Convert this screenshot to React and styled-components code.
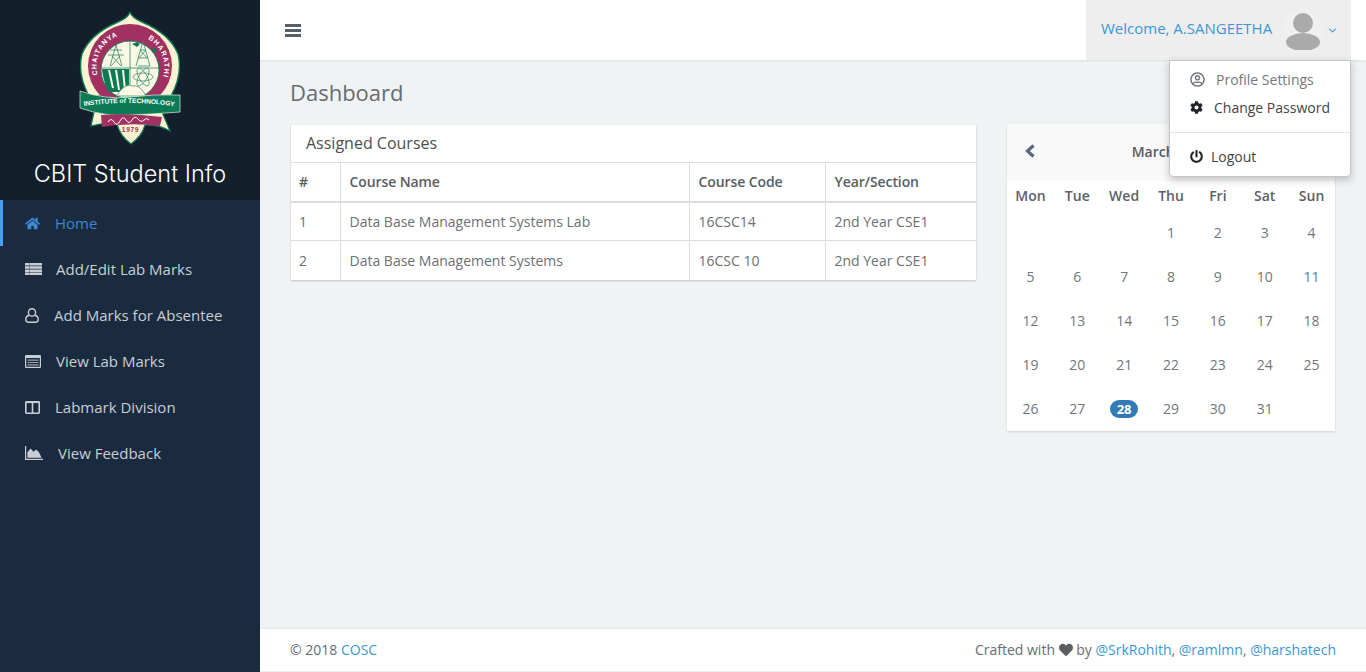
import React from 'react';
import styled, { createGlobalStyle } from 'styled-components';
import {
  FaHome, FaAngleDown, FaCog, FaPowerOff, FaHeart, FaRegUserCircle,
} from 'react-icons/fa';

const GlobalStyle = createGlobalStyle`
  html, body { margin: 0; padding: 0; height: 100%; overflow: hidden; }
  body {
    font-family: "Open Sans", "Liberation Sans", sans-serif;
    font-size: 14px;
    color: #5f6469;
    background: #eff3f4;
  }
  * { box-sizing: border-box; }
`;

const Shell = styled.div`
  display: flex;
  height: 672px;
  width: 1366px;
  position: relative;
`;

const Sidebar = styled.aside`
  width: 260px;
  flex: none;
  background: #1a2b3f;
`;

const Brand = styled.div`
  height: 200px;
  background: #141f2c;
  display: flex;
  flex-direction: column;
  align-items: center;
  padding-top: 12px;
`;

const BrandName = styled.div`
  margin-top: 12px;
  font-family: Inter, "Open Sans", sans-serif;
  font-weight: 300;
  font-size: 23.5px;
  line-height: 30px;
  color: #fff;
`;

const NavList = styled.nav`
  display: flex;
  flex-direction: column;
`;

const NavItem = styled.a`
  height: 46px;
  display: flex;
  align-items: center;
  padding-left: 25px;
  font-size: 15px;
  font-weight: ${p => (p.$active ? 400 : 500)};
  color: ${p => (p.$active ? '#3f87d0' : '#c9ced5')};
  box-shadow: ${p => (p.$active ? 'inset 3px 0 0 #4a9ff5' : 'none')};
`;

const NavIcon = styled.span`
  width: ${p => p.$slot}px;
  flex: none;
  display: flex;
  align-items: center;
  font-size: 15px;
`;

const Body = styled.div`
  flex: 1;
  display: flex;
  flex-direction: column;
  min-width: 0;
`;

const Topbar = styled.header`
  height: 60px;
  flex: none;
  background: #fff;
  display: flex;
  align-items: center;
  justify-content: space-between;
  padding: 0 15px 0 25px;
  box-shadow: 0 1px 2px rgba(0, 0, 0, 0.08);
`;

const Burger = styled.span`
  width: 16px;
  height: 13px;
  margin-top: 1px;
  display: flex;
  flex-direction: column;
  justify-content: space-between;
  span {
    height: 3px;
    background: #56606a;
  }
`;

const UserBox = styled.div`
  width: 265px;
  height: 60px;
  background: #eee;
  display: flex;
  align-items: center;
  padding-left: 15px;
  color: #3a97d8;
`;

const Welcome = styled.span`
  font-size: 15px;
  margin-top: -5px;
  width: 182px;
  white-space: nowrap;
`;

const Caret = styled.span`
  display: flex;
  margin-left: 3px;
  font-size: 13px;
  color: #3a97d8;
  path { stroke: #eee; stroke-width: 40px; }
`;

const Menu = styled.div`
  position: absolute;
  top: 60px;
  left: 1169px;
  width: 182px;
  height: 117px;
  background: #fff;
  border: 1px solid #c4c6c8;
  border-radius: 0 0 4px 4px;
  box-shadow: 0 3px 8px rgba(0, 0, 0, 0.22);
  z-index: 5;
  padding-top: 4px;
`;

const MenuItem = styled.a`
  display: flex;
  align-items: center;
  height: 28px;
  padding-left: 20px;
  color: ${p => (p.$muted ? '#73787c' : '#3f444a')};
`;

const MenuIcon = styled.span`
  width: ${p => p.$slot}px;
  flex: none;
  display: flex;
  font-size: ${p => p.$size || 14}px;
  color: ${p => (p.$muted ? '#6d7175' : '#1f2226')};
`;

const MenuRule = styled.div`
  height: 1px;
  background: #e3e4e5;
  margin: 11px 0 9px;
`;

const Content = styled.main`
  flex: 1;
  padding: 15px 30px 0;
`;

const PageTitle = styled.h1`
  margin: 0;
  font-size: 22px;
  font-weight: 400;
  line-height: 34px;
  color: #676c71;
`;

const Columns = styled.div`
  display: flex;
  align-items: flex-start;
  margin-top: 16px;
`;

const Card = styled.section`
  width: 685px;
  margin-left: 1px;
  background: #fff;
  box-shadow: 0 1px 2px rgba(0, 0, 0, 0.2);
`;

const CardTitle = styled.div`
  height: 37px;
  padding-left: 15px;
  font-size: 16px;
  line-height: 37px;
  color: #4a4e52;
`;

const Table = styled.table`
  width: 100%;
  border-collapse: collapse;
  table-layout: fixed;
`;

const Th = styled.th`
  width: ${p => p.$w}px;
  height: 39px;
  padding: 0 8px 0 9px;
  text-align: left;
  font-weight: 600;
  letter-spacing: -0.1px;
  color: #585d62;
  border-top: 1px solid #ddd;
  border-bottom: 2px solid #ddd;
  border-left: 1px solid #ddd;
  &:first-child { border-left: 0; padding-left: 8px; }
`;

const Td = styled.td`
  height: 39px;
  padding: 0 8px 0 9px;
  color: #6b7075;
  border-top: 1px solid #ddd;
  border-left: 1px solid #ddd;
  &:first-child { border-left: 0; padding-left: 8px; }
`;

const Calendar = styled.section`
  width: 328px;
  margin-left: 31px;
  margin-top: -1px;
  background: #fff;
  box-shadow: 0 1px 2px rgba(0, 0, 0, 0.15);
  height: 307px;
`;

const CalHead = styled.div`
  height: 57px;
  background: #f9f9f9;
  display: flex;
  align-items: center;
  justify-content: space-between;
  padding: 0 17px 3px;
  color: #565b60;
  font-weight: 600;
  font-size: 14px;
`;

const CalGrid = styled.div`
  display: grid;
  grid-template-columns: repeat(7, 1fr);
`;

const DayName = styled.div`
  height: 30px;
  padding-bottom: 2px;
  display: flex;
  align-items: center;
  justify-content: center;
  font-weight: 600;
  color: #5c6166;
`;

const DayCell = styled.div`
  height: 44px;
  padding-bottom: 2px;
  display: flex;
  align-items: center;
  justify-content: center;
  color: #71767b;
`;

const Today = styled.span`
  width: 28px;
  height: 18px;
  margin-top: 2px;
  border-radius: 9px;
  background: #337ab7;
  color: #fff;
  font-weight: 700;
  font-size: 13px;
  line-height: 18px;
  text-align: center;
`;

const Footer = styled.footer`
  height: 44px;
  flex: none;
  background: #fff;
  border-top: 1px solid #e6e9ea;
  border-bottom: 1px solid #eee;
  display: flex;
  align-items: center;
  justify-content: space-between;
  padding: 0 30px 2px;
  color: #676c71;
`;

const FootLink = styled.a`
  color: #3a97d8;
`;

const HeartIcon = styled(FaHeart)`
  font-size: 14px;
  vertical-align: -2px;
  color: #5a5e62;
`;

const GREEN = '#0c7a55';
const MAROON = '#a03161';
const CREAM = '#fdf3d3';

const Logo = () => (
  <svg width="120" height="135" viewBox="0 0 120 135" aria-label="CBIT logo">
    <defs>
      <path id="ringLeft" d="M27.5 63 A33 33 0 0 1 60 22" />
      <path id="ringRight" d="M78 27 A33 33 0 0 1 92 68" />
      <path id="ribbonLine" d="M14 94 Q35 91 60 91 T108 95" />
    </defs>
    {/* lower lotus */}
    <path d="M24 100 L21 114 Q35 110 47 112 Q50 124 61 132 Q72 124 75 113 Q88 112 100 119 L92 100 Z" fill={CREAM} stroke={GREEN} strokeWidth="1.2" />
    {/* dome */}
    <path d="M60 0 Q62 6 72 10 Q100 22 108 42 Q113 62 101 84 L19 84 Q7 62 12 42 Q20 22 48 10 Q58 6 60 0 Z" fill={CREAM} stroke={GREEN} strokeWidth="1.4" />
    {/* ring */}
    <circle cx="60" cy="54" r="42" fill={MAROON} />
    <circle cx="60" cy="58" r="29" fill="#fdf8e4" stroke={GREEN} strokeWidth="0.8" />
    <text fontSize="7" fontWeight="700" fill="#fff" letterSpacing="0.9" fontFamily="Liberation Sans, sans-serif">
      <textPath href="#ringLeft">CHAITANYA</textPath>
    </text>
    <text fontSize="7" fontWeight="700" fill="#fff" letterSpacing="1" fontFamily="Liberation Sans, sans-serif">
      <textPath href="#ringRight">BHARATHI</textPath>
    </text>
    {/* quadrants */}
    <path d="M31 56 H89 M60 29 V82" stroke={GREEN} strokeWidth="0.7" />
    <path d="M32 57 H59 V80 L38 80 Q33 68 32 57 Z" fill={GREEN} />
    <path d="M39 58 L43 76 M46 58 L49 78 M53 58 L55 78" stroke="#fdf8e4" strokeWidth="2" />
    <path d="M46 33 L40 54 M46 33 L52 54 M40 38 H52 M38 43 H54 M41 54 L50 44 M51 54 L42 44" stroke="#2c8c68" strokeWidth="0.8" fill="none" />
    <path d="M73 29 L66 54 M73 29 L80 54 M70 38 H76 M68 46 H78 M68 54 H80 M69 46 L76 38 M77 46 L70 38" stroke="#2c8c68" strokeWidth="0.8" fill="none" />
    <path d="M62 32 l5 -2 l3 2 l-3 3 Z M81 38 l4 -2 l2 3 l-3 2 Z" fill={GREEN} />
    <g stroke="#2c8c68" strokeWidth="0.7" fill="none">
      <ellipse cx="73" cy="65" rx="10" ry="4" />
      <ellipse cx="73" cy="65" rx="10" ry="4" transform="rotate(60 73 65)" />
      <ellipse cx="73" cy="65" rx="10" ry="4" transform="rotate(120 73 65)" />
    </g>
    <path d="M46 84 Q56 70 62 74 Q70 72 76 84 Z" fill="#fdf8e4" stroke={GREEN} strokeWidth="0.6" />
    {/* ribbon */}
    <path d="M10 79 Q36 88 60 85 T110 83 L110 100 Q84 102 60 103 Q36 105 10 96 Z" fill={GREEN} stroke="#dff0e4" strokeWidth="0.7" />
    <text fontSize="6.6" fontWeight="700" fill="#fff" fontFamily="Liberation Sans, sans-serif">
      <textPath href="#ribbonLine">INSTITUTE of TECHNOLOGY</textPath>
    </text>
    {/* motto */}
    <path d="M31 103 Q60 101 92 105 L90 114 Q60 110 32 115 Z" fill={MAROON} />
    <path d="M38 110 q3 -5 6 0 t6 -1 t6 -1 t6 0 t6 -1 t6 1 t5 0" stroke="#fff" strokeWidth="1" fill="none" />
    <text x="60.5" y="119.5" textAnchor="middle" fontSize="6.6" fontWeight="700" fill={MAROON} letterSpacing="0.7" fontFamily="Liberation Sans, sans-serif">1979</text>
  </svg>
);

const Avatar = () => (
  <svg width="40" height="40" viewBox="0 0 40 40" style={{ flex: 'none' }}>
    <circle cx="20" cy="20" r="20" fill="#f0f0f0" />
    <circle cx="20" cy="13" r="10" fill="#aaa" />
    <ellipse cx="20" cy="32" rx="17" ry="9" fill="#aaa" />
  </svg>
);

// FontAwesome 4 style glyphs, redrawn because the v5 set differs
const ThListIcon = () => (
  <svg width="17" height="12" viewBox="0 0 17 12" fill="currentColor">
    <path d="M0 0h17v2.5H0zM0 3.2h17v2.5H0zM0 6.4h17v2.5H0zM0 9.6h17V12H0z" />
    <path d="M4 0h.7v12H4z" fill="#1a2b3f" opacity="0.5" />
  </svg>
);

const UserOIcon = () => (
  <svg width="14" height="15" viewBox="0 0 14 15" fill="none" stroke="currentColor" strokeWidth="1.4">
    <ellipse cx="7" cy="4.4" rx="3.6" ry="3.7" />
    <path d="M4.2 7.2 C1.8 7.6 .8 9.4 .8 11.6 C.8 13.2 1.8 14.2 3.2 14.2 H10.8 C12.2 14.2 13.2 13.2 13.2 11.6 C13.2 9.4 12.2 7.6 9.8 7.2" />
  </svg>
);

const ListAltIcon = () => (
  <svg width="16" height="13" viewBox="0 0 16 13" fill="currentColor">
    <path fillRule="evenodd" d="M1.2 0h13.6A1.2 1.2 0 0 1 16 1.2v10.6a1.2 1.2 0 0 1-1.2 1.2H1.2A1.2 1.2 0 0 1 0 11.8V1.2A1.2 1.2 0 0 1 1.2 0zM1.2 3v8.8h13.6V3z" />
    <path d="M2.5 4.5h11v1.2h-11zM2.5 6.9h11v1.2h-11zM2.5 9.2h11v1.2h-11z" opacity="0.75" />
  </svg>
);

const ColumnsIcon = () => (
  <svg width="15" height="13" viewBox="0 0 15 13" fill="none" stroke="currentColor" strokeWidth="1.6">
    <rect x="0.8" y="0.9" width="13.4" height="11.3" rx="0.6" />
    <path d="M7.5 1v11" />
    <path d="M0.7 1.3h13.6" />
  </svg>
);

const AreaIcon = () => (
  <svg width="18" height="14" viewBox="0 0 18 14" fill="currentColor">
    <path d="M0 0h1.2v12.8H18V14H0z" />
    <path d="M2.4 11.8V6.2L5.6 2.4l3 3.4 2.4-2.2 3 2.6 2.6 5.6z" />
  </svg>
);

const BackIcon = () => (
  <svg width="12" height="14" viewBox="0 0 12 14" fill="none" stroke="#566a7d" strokeWidth="3.2">
    <path d="M9.5 1.5 L3.5 7 L9.5 12.5" />
  </svg>
);

const ForwardIcon = () => (
  <svg width="12" height="14" viewBox="0 0 12 14" fill="none" stroke="#566a7d" strokeWidth="3.2">
    <path d="M2.5 1.5 L8.5 7 L2.5 12.5" />
  </svg>
);

const navItems = [
  { label: 'Home', icon: FaHome, slot: 30, active: true },
  { label: 'Add/Edit Lab Marks', icon: ThListIcon, slot: 31 },
  { label: 'Add Marks for Absentee', icon: UserOIcon, slot: 29 },
  { label: 'View Lab Marks', icon: ListAltIcon, slot: 31 },
  { label: 'Labmark Division', icon: ColumnsIcon, slot: 30 },
  { label: 'View Feedback', icon: AreaIcon, slot: 33 },
];

const days = ['Mon', 'Tue', 'Wed', 'Thu', 'Fri', 'Sat', 'Sun'];
const dates = [null, null, null];
for (let i = 1; i <= 31; i++) dates.push(i);

const courses = [
  ['1', 'Data Base Management Systems Lab', '16CSC14', '2nd Year CSE1'],
  ['2', 'Data Base Management Systems', '16CSC 10', '2nd Year CSE1'],
];

const App = () => (
  <Shell>
    <GlobalStyle />
    <Sidebar>
      <Brand>
        <Logo />
        <BrandName>CBIT Student Info</BrandName>
      </Brand>
      <NavList>
        {navItems.map(item => (
          <NavItem key={item.label} $active={item.active}>
            <NavIcon $slot={item.slot}><item.icon /></NavIcon>
            {item.label}
          </NavItem>
        ))}
      </NavList>
    </Sidebar>

    <Body>
      <Topbar>
        <Burger><span /><span /><span /></Burger>
        <UserBox>
          <Welcome>Welcome, A.SANGEETHA</Welcome>
          <Avatar />
          <Caret><FaAngleDown /></Caret>
        </UserBox>
      </Topbar>

      <Content>
        <PageTitle>Dashboard</PageTitle>
        <Columns>
          <Card>
            <CardTitle>Assigned Courses</CardTitle>
            <Table>
              <thead>
                <tr>
                  <Th $w={49}>#</Th>
                  <Th $w={349}>Course Name</Th>
                  <Th $w={136}>Course Code</Th>
                  <Th $w={151}>Year/Section</Th>
                </tr>
              </thead>
              <tbody>
                {courses.map(row => (
                  <tr key={row[0]}>
                    {row.map(cell => <Td key={cell}>{cell}</Td>)}
                  </tr>
                ))}
              </tbody>
            </Table>
          </Card>

          <Calendar>
            <CalHead>
              <BackIcon />
              <span>March 2018</span>
              <ForwardIcon />
            </CalHead>
            <CalGrid>
              {days.map(d => <DayName key={d}>{d}</DayName>)}
              {dates.map((d, i) => (
                <DayCell key={i}>{d === 28 ? <Today>28</Today> : d}</DayCell>
              ))}
            </CalGrid>
          </Calendar>
        </Columns>
      </Content>

      <Footer>
        <span>© 2018 <FootLink>COSC</FootLink></span>
        <span>
          Crafted with <HeartIcon /> by <FootLink>@SrkRohith</FootLink>, <FootLink>@ramlmn</FootLink>, <FootLink>@harshatech</FootLink>
        </span>
      </Footer>
    </Body>

    <Menu>
      <MenuItem $muted>
        <MenuIcon $slot={26} $muted $size={15}><FaRegUserCircle /></MenuIcon>
        Profile Settings
      </MenuItem>
      <MenuItem>
        <MenuIcon $slot={24} $size={13}><FaCog /></MenuIcon>
        Change Password
      </MenuItem>
      <MenuRule />
      <MenuItem>
        <MenuIcon $slot={21} $size={13}><FaPowerOff /></MenuIcon>
        Logout
      </MenuItem>
    </Menu>
  </Shell>
);

export default App;
